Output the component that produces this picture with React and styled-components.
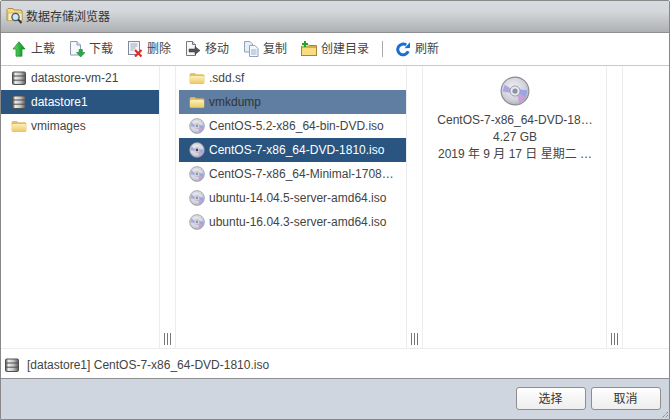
import React, { useId } from "react";
import styled, { createGlobalStyle } from "styled-components";

const Global = createGlobalStyle`
  html, body { margin: 0; padding: 0; background: #fff; }
  body { font-family: "Liberation Sans", Arial, "Noto Sans CJK SC", sans-serif; font-size: 12px; color: #333; }
`;

const Win = styled.div`
  width: 670px; height: 420px; box-sizing: border-box;
  border: 1px solid #888; border-radius: 2px 2px 0 0;
  display: flex; flex-direction: column; position: relative; background: #fff;
`;
const TitleBar = styled.div`
  height: 32px; flex: none; display: flex; align-items: center; gap: 2px; padding: 0 0 3px 5px;
  box-sizing: border-box;
  background: linear-gradient(#d7dbe0, #d3d6da 35%, #aeb0b2);
  border-bottom: 1px solid #8e8f90;
  font-family: "Noto Sans CJK SC", sans-serif; font-size: 12px; color: #333;
`;
const Toolbar = styled.div`
  height: 33px; flex: none; display: flex; align-items: center; gap: 14px; padding: 0 0 1px 10px;
  box-sizing: border-box;
  border-bottom: 1px solid #c9c9c9;
`;
const Tool = styled.div`
  display: flex; align-items: center; gap: 4px; color: #444;
  font-family: "Noto Sans CJK SC", sans-serif; font-size: 12px;
`;
const ToolLabel = styled.span`
  padding-bottom: 2px;
`;
const Sep = styled.div`
  width: 1px; height: 16px; background: #a8a8a8; margin: 0 -2px 0 -1px;
`;
const Columns = styled.div`
  flex: 1; display: flex; min-height: 0;
`;
const Col = styled.div`
  width: ${p => p.$w}px; flex: none; box-sizing: border-box;
  padding: 0 0 0 ${p => p.$inset || 0}px;
  display: flex; flex-direction: column;
`;
const Gutter = styled.div`
  width: 15px; flex: none; position: relative; box-sizing: content-box;
  border-left: 1px solid #ececec; border-right: 1px solid #ececec;
`;
const Handle = styled.div`
  position: absolute; left: 4px; bottom: 3px; width: 5px; height: 12px;
  border-left: 1px solid #777; border-right: 1px solid #777;
  &::after { content: ""; position: absolute; left: 2px; top: 0; width: 1px; height: 12px; background: #777; }
`;
const Row = styled.div`
  height: 24px; display: flex; align-items: center; gap: 4px; box-sizing: border-box;
  padding-left: 10px; white-space: nowrap;
  color: ${p => (p.$sel === "on" ? "#fff" : p.$sel === "dim" ? "#333" : "#444")};
  background: ${p => (p.$sel === "on" ? "#2a5580" : p.$sel === "dim" ? "#5f7ea1" : "transparent")};
`;
const Preview = styled.div`
  width: 183px; flex: none; box-sizing: border-box; display: flex; flex-direction: column; align-items: center;
  padding: 10px 0 0 1px; color: #444; line-height: 17px;
`;
const PreviewLine = styled.div`
  margin-top: ${p => p.$mt || 0}px; white-space: nowrap;
`;
const PathBar = styled.div`
  height: 30px; flex: none; box-sizing: border-box; display: flex; align-items: center; gap: 7px; padding: 2px 0 0 3px;
  border-top: 1px solid #ececec; color: #444;
`;
const Footer = styled.div`
  height: 40px; flex: none; box-sizing: content-box; background: #d0d6df; border-top: 1px solid #8f8f8f;
  display: flex; justify-content: flex-end; align-items: flex-start; gap: 5px; padding-right: 8px;
`;
const Btn = styled.button`
  margin-top: 8px; width: 70px; height: 23px; padding: 0 1px 2px 0; box-sizing: border-box; border: 1px solid #8e8e8e; border-radius: 3px;
  background: linear-gradient(#fff, #f6f6f6 45%, #eeeeee);
  font-family: "Noto Sans CJK SC", sans-serif; font-size: 12px; color: #333;
`;
const Grip = styled.svg`
  position: absolute; right: 0; bottom: 0;
`;
const Ico = styled.svg`
  flex: none; display: block;
`;

const Folder = () => {
  const id = useId();
  return (
    <Ico width="16" height="16" viewBox="0 0 16 16">
      <defs>
        <linearGradient id={id} x1="0" y1="0" x2="0" y2="1">
          <stop offset="0" stopColor="#fdf0b8" />
          <stop offset="1" stopColor="#ecca68" />
        </linearGradient>
      </defs>
      <path d="M1 4.5 1.6 3.5H6l1 1.2h7.4l.6.8V13l-.6.5H1.6L1 13z" fill="#e3c163" stroke="#d6b65c" strokeWidth=".7" />
      <path d="M1 7l1-1h12l1 1v6l-.6.5H1.6L1 13z" fill={`url(#${id})`} />
    </Ico>
  );
};

const Disc = ({ size = 16, active }) => {
  const id = useId();
  return (
    <Ico width={size} height={size} viewBox="0 0 16 16">
      <defs>
        <radialGradient id={id} cx=".45" cy=".4" r=".7">
          <stop offset="0" stopColor="#f2f2f6" />
          <stop offset=".6" stopColor="#d0d2dc" />
          <stop offset="1" stopColor="#a0a0ac" />
        </radialGradient>
      </defs>
      <circle cx="8" cy="8" r="7.4" fill={`url(#${id})`} stroke="#8a8a92" strokeWidth=".6" />
      <path d="M2.4 4.6 6.2 6.9 5.5 8.9 1.4 8.3z" fill="#a79be0" opacity=".85" />
      <path d="M13.6 11.4 9.8 9.1 10.5 7.1 14.6 7.7z" fill="#8e9fe6" opacity=".85" />
      <path d="M10.3 14.3 9.1 10 10.6 8.9 13.8 12z" fill="#c98fd8" opacity=".75" />
      <circle cx="8" cy="8" r="2.7" fill="#e9eaf0" stroke="#9a9aa6" strokeWidth=".5" />
      <circle cx="8" cy="8" r="1.4" fill={active ? "#444" : "#8d92a8"} />
    </Ico>
  );
};

const Store = () => {
  const id = useId();
  return (
    <Ico width="16" height="16" viewBox="0 0 16 16">
      <defs>
        <linearGradient id={id} x1="0" y1="0" x2="1" y2="0">
          <stop offset="0" stopColor="#4d4d4d" />
          <stop offset=".22" stopColor="#ededed" />
          <stop offset=".6" stopColor="#c2c2c2" />
          <stop offset="1" stopColor="#5a5a5a" />
        </linearGradient>
      </defs>
      <rect x="1.5" y="2" width="13" height="12.5" rx="1.2" fill={`url(#${id})`} stroke="#4f4f4f" />
      <path d="M2 6h12M2 10.2h12" stroke="#4f4f4f" />
    </Ico>
  );
};

const Up = () => {
  const id = useId();
  return (
    <Ico width="16" height="16" viewBox="0 0 16 16">
      <defs>
        <linearGradient id={id} x1="0" y1="0" x2="1" y2="0">
          <stop offset="0" stopColor="#7fdc7a" />
          <stop offset=".5" stopColor="#2fb83e" />
          <stop offset="1" stopColor="#0f8226" />
        </linearGradient>
      </defs>
      <path d="M8 .8 14 8H11v7.2H5V8H2z" fill={`url(#${id})`} stroke="#138a2a" strokeWidth=".7" />
    </Ico>
  );
};
const Down = () => (
  <Ico width="16" height="16" viewBox="0 0 16 16">
    <path d="M1.5.5H8l3.5 3.5v10h-10z" fill="#f6f8fc" stroke="#8c9bb0" />
    <path d="M8 .5V4h3.5" fill="#dfe6f0" stroke="#8c9bb0" />
    <path d="M10 8.5h3.4v3H16L11.7 16 7.4 11.5H10z" fill="#2aa848" stroke="#1e8c3a" strokeWidth=".6" />
  </Ico>
);
const Del = () => (
  <Ico width="16" height="16" viewBox="0 0 16 16">
    <rect x="1.5" y=".5" width="11" height="13" fill="#f5f6fa" stroke="#7e8aa0" />
    <path d="M3.5 3h7M3.5 5h7M3.5 7h5M3.5 9h3" stroke="#9aa6ba" />
    <path d="M8 9 14.5 15.5M14.5 9 8 15.5" stroke="#d8302a" strokeWidth="2.2" />
  </Ico>
);
const Move = () => (
  <Ico width="16" height="16" viewBox="0 0 16 16">
    <path d="M1.5.5H7.5l3 3v11h-9z" fill="#f8f8f8" stroke="#777" />
    <path d="M7.5.5V3.5h3" fill="#ddd" stroke="#777" />
    <path d="M4 8h6V5.5L15 9.5 10 13.5V11H4z" fill="#555" stroke="#333" strokeWidth=".5" />
  </Ico>
);
const Copy = () => (
  <Ico width="16" height="16" viewBox="0 0 16 16">
    <path d="M1.5.5H7l2.5 2.5v8h-8z" fill="#e8eef8" stroke="#8fa3bf" />
    <path d="M6.5 4.5H12l3 3v8H6.5z" fill="#f4f7fc" stroke="#8fa3bf" />
    <path d="M8 9h5.5M8 11h5.5M8 13h5.5" stroke="#9ab0cc" />
  </Ico>
);
const NewDir = () => (
  <Ico width="16" height="16" viewBox="0 0 16 16">
    <path d="M.5 5V14.5H15.5V4.5H8L7 3.5H3" fill="#f6d873" stroke="#a88434" />
    <rect x=".5" y="6" width="15" height="8.5" fill="#f7dc80" stroke="#a88434" />
    <path d="M4 0v6M1 3h6" stroke="#1fa52f" strokeWidth="2" />
  </Ico>
);
const Refresh = () => (
  <Ico width="16" height="16" viewBox="0 0 16 16">
    <path d="M13.2 10.3A5.4 5.4 0 1 1 11.2 4" fill="none" stroke="#1a6fd0" strokeWidth="3" />
    <path d="M9.5 7.2 15 7V1.3z" fill="#1a6fd0" />
  </Ico>
);
const TitleIcon = () => (
  <Ico width="18" height="18" viewBox="0 0 18 18">
    <path d="M1 3.5 2 2.5H7L8 4h7l1 1v9.5H2L1 14z" fill="#f3d98a" stroke="#b18f3e" />
    <path d="M2 7h14v7.5H2z" fill="#fbeebd" stroke="#c4a24e" strokeWidth=".6" />
    <circle cx="9.5" cy="11" r="3.6" fill="#cfe4f4" stroke="#40586f" strokeWidth="1.3" />
    <path d="M12.3 13.6 15.5 17" stroke="#333" strokeWidth="2" />
  </Ico>
);

const tools = [
  [Up, "上载"], [Down, "下载"], [Del, "删除"], [Move, "移动"], [Copy, "复制"], [NewDir, "创建目录"],
];
const files = [
  [Folder, ".sdd.sf"],
  [Folder, "vmkdump", "dim"],
  [Disc, "CentOS-5.2-x86_64-bin-DVD.iso"],
  [Disc, "CentOS-7-x86_64-DVD-1810.iso", "on"],
  [Disc, "CentOS-7-x86_64-Minimal-1708…"],
  [Disc, "ubuntu-14.04.5-server-amd64.iso"],
  [Disc, "ubuntu-16.04.3-server-amd64.iso"],
];

export default function App() {
  return (
    <Win>
      <Global />
      <TitleBar><TitleIcon /><span>数据存储浏览器</span></TitleBar>
      <Toolbar>
        {tools.map(([I, t]) => <Tool key={t}><I /><ToolLabel>{t}</ToolLabel></Tool>)}
        <Sep />
        <Tool><Refresh /><ToolLabel>刷新</ToolLabel></Tool>
      </Toolbar>
      <Columns>
        <Col $w={158}>
          <Row><Store /><span>datastore-vm-21</span></Row>
          <Row $sel="on"><Store /><span>datastore1</span></Row>
          <Row><Folder /><span>vmimages</span></Row>
        </Col>
        <Gutter><Handle /></Gutter>
        <Col $w={230} $inset={3}>
          {files.map(([I, t, s]) => (
            <Row key={t} $sel={s}><I active={s === "on"} /><span>{t}</span></Row>
          ))}
        </Col>
        <Gutter><Handle /></Gutter>
        <Preview>
          <Disc size={30} />
          <PreviewLine $mt={6}>CentOS-7-x86_64-DVD-18…</PreviewLine>
          <PreviewLine>4.27 GB</PreviewLine>
          <PreviewLine>2019 年 9 月 17 日 星期二 …</PreviewLine>
        </Preview>
        <Gutter><Handle /></Gutter>
      </Columns>
      <PathBar><Store /><span>[datastore1] CentOS-7-x86_64-DVD-1810.iso</span></PathBar>
      <Footer>
        <Btn>选择</Btn>
        <Btn>取消</Btn>
      </Footer>
      <Grip width="10" height="10" viewBox="0 0 10 10">
        <path d="M9 3 3 9M9 6 6 9" stroke="#666" strokeDasharray="1 1" />
      </Grip>
    </Win>
  );
}
